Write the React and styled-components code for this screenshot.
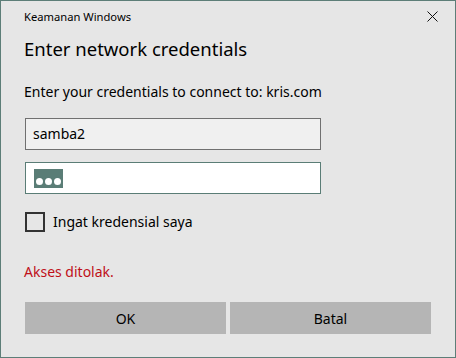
import React, { useState } from 'react';
import styled, { createGlobalStyle } from 'styled-components';

const GlobalStyle = createGlobalStyle`
  html, body {
    margin: 0;
    padding: 0;
    background: #e6e6e6;
  }
  * {
    box-sizing: border-box;
  }
`;

const Window = styled.div`
  width: 456px;
  height: 358px;
  border: 1px solid #5d7e78;
  background: #e6e6e6;
  font-family: "Noto Sans", "Open Sans", sans-serif;
  color: #000;
  display: flex;
  flex-direction: column;
`;

const TitleBar = styled.div`
  height: 32px;
  display: flex;
  align-items: center;
  justify-content: space-between;
  padding: 0 17px 1px 23px;
`;

const TitleText = styled.span`
  font-size: 11.2px;
  line-height: 16px;
`;

const CloseButton = styled.button`
  width: 11px;
  height: 11px;
  padding: 0;
  border: none;
  background: none;
  display: flex;
  cursor: pointer;
`;

const Content = styled.div`
  padding: 0 24px;
  display: flex;
  flex-direction: column;
`;

const Heading = styled.h1`
  margin: 2px 0 0 -1px;
  font-size: 18.5px;
  line-height: 28px;
  font-weight: 400;
`;

const Text = styled.p`
  margin: ${({ $top }) => $top || 0}px 0 0 -1px;
  font-size: 14px;
  line-height: 20px;
  color: ${({ $error }) => ($error ? '#bf1019' : '#000')};
`;

const Field = styled.div`
  margin-top: ${({ $top }) => $top}px;
  width: 296px;
  height: 32px;
  border: 1px solid ${({ $focused }) => ($focused ? '#5a7d76' : '#707070')};
  background: ${({ $focused }) => ($focused ? '#fff' : '#f0f0f0')};
  display: flex;
  align-items: center;
  padding: 0 7px;
  font-size: 14px;
  line-height: 20px;
`;

const Selection = styled.span`
  height: 19px;
  margin-left: 1px;
  margin-top: 1px;
  padding: 0 2px 3px;
  background: #5a7d76;
  display: flex;
  align-items: flex-end;
  gap: 2px;
`;

const Dot = styled.span`
  width: 7px;
  height: 7px;
  border-radius: 50%;
  background: #fff;
`;

const CheckRow = styled.label`
  margin-top: 18px;
  display: flex;
  align-items: center;
  gap: 8px;
  cursor: pointer;
`;

const CheckBox = styled.span`
  width: 20px;
  height: 20px;
  border: 2px solid #333;
  background: ${({ $checked }) => ($checked ? '#5a7d76' : 'transparent')};
`;

const CheckLabel = styled.span`
  font-size: 14px;
  line-height: 20px;
`;

const ButtonRow = styled.div`
  margin-top: 20px;
  display: grid;
  grid-template-columns: 1fr 1fr;
  gap: 4px;
`;

const Button = styled.button`
  height: 32px;
  border: none;
  background: #b5b5b5;
  font-family: inherit;
  font-size: 14px;
  color: #000;
  cursor: pointer;
`;

const App = () => {
  const [remember, setRemember] = useState(false);

  return (
    <>
      <GlobalStyle />
      <Window>
        <TitleBar>
          <TitleText>Keamanan Windows</TitleText>
          <CloseButton aria-label="Close">
            <svg width="11" height="11" viewBox="0 0 11 11">
              <path d="M0.5 0.5L10.5 10.5M10.5 0.5L0.5 10.5" stroke="#111" strokeWidth="1" />
            </svg>
          </CloseButton>
        </TitleBar>
        <Content>
          <Heading>Enter network credentials</Heading>
          <Text $top={19}>Enter your credentials to connect to: kris.com</Text>
          <Field $top={16}>samba2</Field>
          <Field $top={12} $focused>
            <Selection>
              <Dot />
              <Dot />
              <Dot />
            </Selection>
          </Field>
          <CheckRow onClick={() => setRemember(!remember)}>
            <CheckBox $checked={remember} />
            <CheckLabel>Ingat kredensial saya</CheckLabel>
          </CheckRow>
          <Text $top={30} $error>Akses ditolak.</Text>
          <ButtonRow>
            <Button>OK</Button>
            <Button>Batal</Button>
          </ButtonRow>
        </Content>
      </Window>
    </>
  );
};

export default App;
